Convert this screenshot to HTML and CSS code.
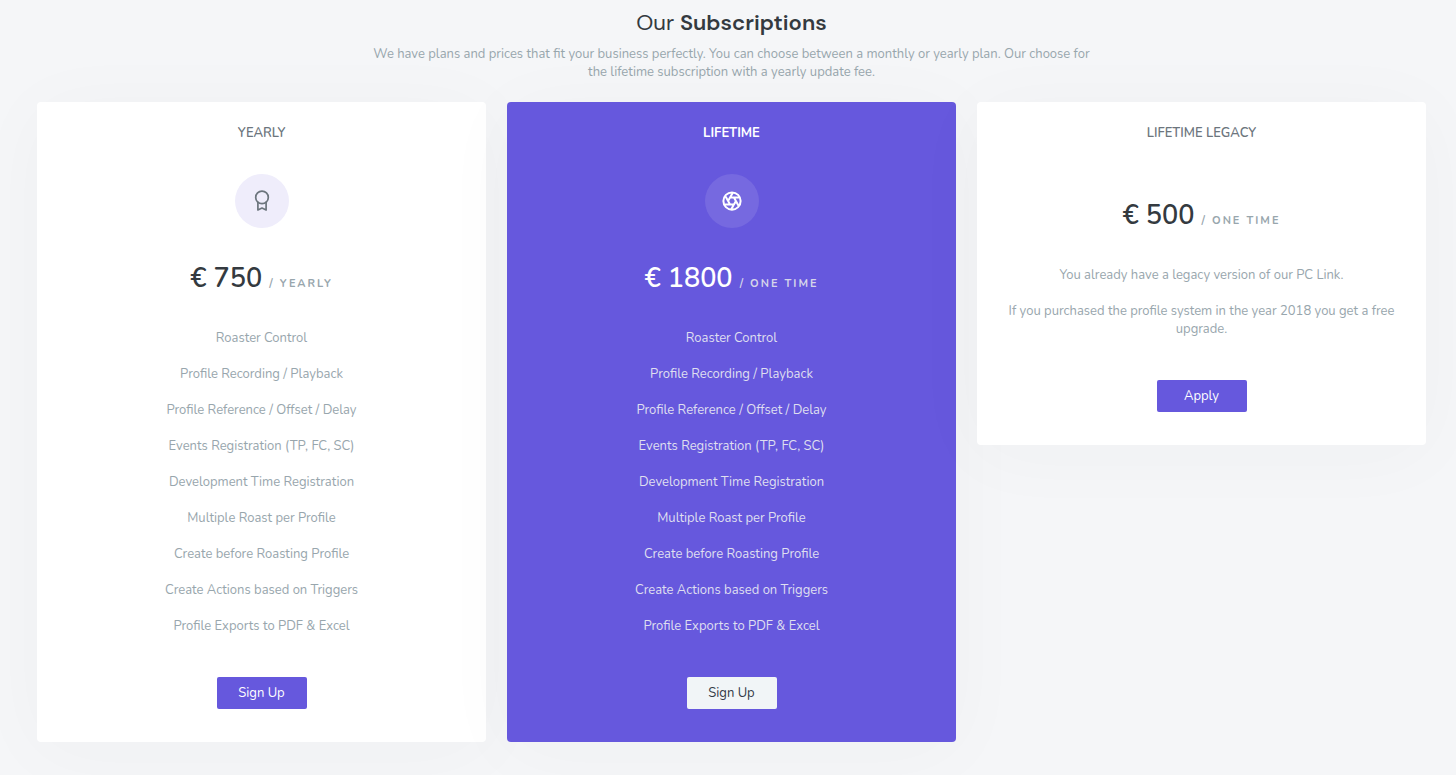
FILE: index.html
```html
<!DOCTYPE html>
<html lang="en">
<head>
  <meta charset="UTF-8" />
  <meta name="viewport" content="width=device-width, initial-scale=1.0"/>
  <title>Our Subscriptions</title>
  <link rel="stylesheet" href="styles.css">
</head>
<body>
  <section class="pricing">
    <header class="intro">
      <h2>Our <b>Subscriptions</b></h2>
      <p>We have plans and prices that fit your business perfectly. You can choose between a monthly or yearly plan. Our choose for the lifetime subscription with a yearly update fee.</p>
    </header>

    <div class="plans">
      <!-- Yearly -->
      <div class="plan">
        <h5 class="plan-name">Yearly</h5>
        <div class="plan-icon">
          <svg viewBox="0 0 22 22" width="22" height="22" fill="none" stroke="currentColor" stroke-width="1.7" stroke-linejoin="round" stroke-linecap="round">
            <circle cx="11" cy="7.4" r="6.3"/>
            <path d="M6.9 12.4v7.6l4.1-2 4.1 2v-7.6"/>
          </svg>
        </div>
        <h2 class="plan-price">€ 750 <span>/ Yearly</span></h2>
        <ul class="plan-features">
          <li>Roaster Control</li>
          <li>Profile Recording / Playback</li>
          <li>Profile Reference / Offset / Delay</li>
          <li>Events Registration (TP, FC, SC)</li>
          <li>Development Time Registration</li>
          <li>Multiple Roast per Profile</li>
          <li>Create before Roasting Profile</li>
          <li>Create Actions based on Triggers</li>
          <li>Profile Exports to PDF &amp; Excel</li>
        </ul>
        <button class="btn">Sign Up</button>
      </div>

      <!-- Lifetime -->
      <div class="plan plan-active">
        <h5 class="plan-name">Lifetime</h5>
        <div class="plan-icon">
          <svg viewBox="0 0 24 24" width="22" height="22" fill="none" stroke="currentColor" stroke-width="2.2" stroke-linejoin="round" stroke-linecap="round">
            <circle cx="12" cy="12" r="9.4"/>
            <path d="M14.1 8.3l4.6 8M9.9 8.3h9.3M7.7 12l4.7-8.1M9.9 15.7L5.3 7.7M14.1 15.7H4.8M16.3 12l-4.7 8.1"/>
          </svg>
        </div>
        <h2 class="plan-price">€ 1800 <span>/ One Time</span></h2>
        <ul class="plan-features">
          <li>Roaster Control</li>
          <li>Profile Recording / Playback</li>
          <li>Profile Reference / Offset / Delay</li>
          <li>Events Registration (TP, FC, SC)</li>
          <li>Development Time Registration</li>
          <li>Multiple Roast per Profile</li>
          <li>Create before Roasting Profile</li>
          <li>Create Actions based on Triggers</li>
          <li>Profile Exports to PDF &amp; Excel</li>
        </ul>
        <button class="btn btn-light">Sign Up</button>
      </div>

      <!-- Lifetime legacy -->
      <div class="plan">
        <h5 class="plan-name">Lifetime Legacy</h5>
        <h2 class="plan-price">€ 500 <span>/ One Time</span></h2>
        <ul class="plan-features">
          <li>You already have a legacy version of our PC Link.</li>
          <li>If you purchased the profile system in the year 2018 you get a free upgrade.</li>
        </ul>
        <button class="btn">Apply</button>
      </div>
    </div>
  </section>
</body>
</html>
```
FILE: styles.css
```css
* { box-sizing: border-box; }

body {
  margin: 0;
  background: #f5f6f8;
  font-family: Nunito, Lato, sans-serif;
  font-size: 13px;
  line-height: 18px;
  color: #98a6ad;
  text-align: center;
}

h2, h5, p, ul { margin: 0; padding: 0; }

.pricing { padding: 9px 30px 33px 37px; }

.intro {
  max-width: 724px;
  margin: 0 auto 21px;
}

.intro h2 {
  margin-bottom: 8px;
  font-family: "DM Sans", Inter, sans-serif;
  font-size: 22px;
  line-height: 28px;
  font-weight: 400;
  color: #343a40;
}

.intro b { font-weight: 600; }

.plans {
  display: grid;
  grid-template-columns: repeat(3, 1fr);
  gap: 21px;
  align-items: start;
}

.plan {
  display: flex;
  flex-direction: column;
  align-items: center;
  padding: 22px 30px 33px;
  background: #fff;
  border-radius: 4px;
  box-shadow: 0 8px 80px rgba(50, 58, 70, 0.03);
}

.plan-name {
  padding-bottom: 23px;
  font-size: 13px;
  font-weight: 600;
  text-transform: uppercase;
  color: #6c757d;
}

.plan-icon {
  display: flex;
  align-items: center;
  justify-content: center;
  width: 54px;
  height: 54px;
  margin-top: 9px;
  border-radius: 50%;
  background: #efedfb;
  color: #6c757d;
}

.plan-price {
  margin-top: 33px;
  font-size: 27px;
  line-height: 36px;
  font-weight: 600;
  color: #343a40;
}

.plan-price span {
  font-size: 11px;
  line-height: 1;
  font-weight: 700;
  letter-spacing: 2px;
  text-transform: uppercase;
  color: #98a6ad;
}

.plan-features {
  display: flex;
  flex-direction: column;
  gap: 18px;
  margin: 32px 0 42px;
  list-style: none;
}

.btn {
  width: 90px;
  height: 32px;
  border: none;
  border-radius: 2px;
  background: #6658dd;
  color: #fff;
  font: inherit;
  cursor: pointer;
}

.btn:hover { background: #5546d6; }

.plan-active { background: #6658dd; color: #dfdff0; }

.plan-active .plan-name { font-weight: 700; }

.plan-active .plan-name,
.plan-active .plan-price { color: #fff; }

.plan-active .plan-price span { color: #d5d5ea; }

.plan-active .plan-icon {
  background: #7669e0;
  color: #fff;
}

.btn-light {
  background: #f1f5f7;
  color: #323a46;
}

.btn-light:hover { background: #e3eaef; }
```
